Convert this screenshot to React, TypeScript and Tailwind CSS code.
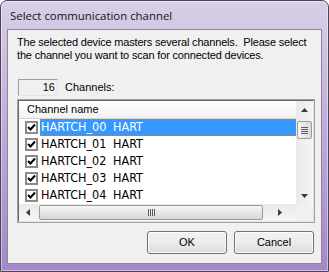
import React from "react";

const ui = { fontFamily: '"Liberation Sans", Arial, sans-serif' };
const listFont = { fontFamily: '"Liberation Sans Narrow", "DejaVu Sans Condensed", "Liberation Sans", sans-serif' };
const title = { fontFamily: '"Open Sans", "Noto Sans", sans-serif' };

function Check() {
  return (
    <svg width="9" height="9" viewBox="0 0 9 9">
      <path d="M1 4 L3.5 6.5 L8 1.5" fill="none" stroke="#000" strokeWidth="2" />
    </svg>
  );
}

function Tri({ dir }: { dir: "up" | "down" | "left" | "right" }) {
  const p =
    dir === "up"
      ? "M0 4 L3.5 0 L7 4 Z"
      : dir === "down"
      ? "M0 0 L7 0 L3.5 4 Z"
      : dir === "left"
      ? "M4 0 L4 7 L0 3.5 Z"
      : "M0 0 L0 7 L4 3.5 Z";
  const w = dir === "up" || dir === "down" ? 7 : 4;
  const h = dir === "up" || dir === "down" ? 4 : 7;
  return (
    <svg width={w} height={h} viewBox={`0 0 ${w} ${h}`}>
      <path d={p} fill="#3a3a3a" />
    </svg>
  );
}

export default function App() {
  const rows = ["HARTCH_00", "HARTCH_01", "HARTCH_02", "HARTCH_03", "HARTCH_04"];
  return (
    <div className="w-[329px] h-[272px] flex flex-col rounded-t-[7px] border border-[#4a4656] bg-gradient-to-b from-[#d9cfe5] via-[#bfa9da] to-[#a587c8] shadow-[inset_0_0_0_1px_rgba(255,255,255,0.45)]">
      <div className="h-[28px] flex items-center pl-[9px] pt-[1px] text-[11.4px] text-[#141414]" style={title}>
        Select communication channel
      </div>
      <div className="mx-[6px] h-[235px] border border-[#8d8699] bg-[#f0f0f0] flex flex-col text-[11px] text-black" style={ui}>
        <div className="pl-[9px] pt-[6px] leading-[13px] tracking-[-0.18px]">
          <div>The selected device masters several channels.&nbsp; Please select</div>
          <div>the channel you want to scan for connected devices.</div>
        </div>
        <div className="mt-[17px] ml-[10px] flex items-center">
          <div className="w-[40px] h-[17px] border border-t-[#a0a0a0] border-l-[#a0a0a0] border-r-[#e3e3e3] border-b-[#e3e3e3] flex items-center justify-end pr-[2px]">
            16
          </div>
          <div className="ml-[7px]">Channels:</div>
        </div>
        <div className="mt-[3px] ml-[9px] w-[298px] h-[124px] border border-[#a0a0a0] flex">
          <div className="flex-1 border border-[#696969] border-r-[#e3e3e3] border-b-[#e3e3e3] bg-white flex flex-col">
            <div className="flex h-[103px]">
              <div className="w-[277px] flex flex-col">
                <div className="h-[18px] flex items-center pl-[8px] border-b border-[#d5d5d5] bg-gradient-to-b from-[#ffffff] to-[#f2f2f2]">
                  Channel name
                </div>
                {rows.map((r, i) => (
                  <div key={r} className="h-[17px] flex items-center text-[12.5px]" style={listFont}>
                    <div className="ml-[6px] w-[13px] h-[13px] shrink-0 border-2 border-[#8a8a8a] bg-white flex items-center justify-center">
                      <Check />
                    </div>
                    <div
                      className={
                        "ml-[2px] flex-1 h-[17px] flex items-center pl-[1px] " +
                        (i === 0 ? "bg-[#3399ff] text-white border-y border-dotted border-[#d9782a]" : "")
                      }
                    >
                      <div className="w-[72px] shrink-0">{r}</div>
                      <div>HART</div>
                    </div>
                  </div>
                ))}
              </div>
              <div className="w-[17px] flex flex-col bg-gradient-to-r from-[#e9e9e9] to-[#f5f5f5]">
                <div className="h-[17px] flex items-center justify-center">
                  <Tri dir="up" />
                </div>
                <div className="mt-[3px] mx-[1px] h-[18px] rounded-[2px] border border-[#9b9b9b] bg-gradient-to-r from-[#f6f6f6] to-[#dadada] flex flex-col items-center justify-center gap-[1px]">
                  <div className="w-[7px] h-[1px] bg-[#5d5d5d]" />
                  <div className="w-[7px] h-[1px] bg-[#5d5d5d]" />
                  <div className="w-[7px] h-[1px] bg-[#5d5d5d]" />
                  <div className="w-[7px] h-[1px] bg-[#5d5d5d]" />
                </div>
                <div className="flex-1" />
                <div className="h-[17px] flex items-center justify-center">
                  <Tri dir="down" />
                </div>
              </div>
            </div>
            <div className="h-[17px] flex">
              <div className="w-[277px] flex bg-gradient-to-b from-[#e9e9e9] to-[#f5f5f5]">
                <div className="w-[17px] flex items-center justify-center">
                  <Tri dir="left" />
                </div>
                <div className="ml-[3px] my-[1px] w-[224px] rounded-[2px] border border-[#9b9b9b] bg-gradient-to-b from-[#f6f6f6] to-[#d6d6d6] flex items-center justify-center gap-[1px]">
                  <div className="w-[1px] h-[7px] bg-[#5d5d5d]" />
                  <div className="w-[1px] h-[7px] bg-[#5d5d5d]" />
                  <div className="w-[1px] h-[7px] bg-[#5d5d5d]" />
                  <div className="w-[1px] h-[7px] bg-[#5d5d5d]" />
                </div>
                <div className="flex-1 flex items-center justify-center">
                  <Tri dir="right" />
                </div>
              </div>
              <div className="flex-1 bg-[#f0f0f0]" />
            </div>
          </div>
        </div>
        <div className="mt-[8px] flex justify-end gap-[7px] pr-[7px]">
          {["OK", "Cancel"].map((b) => (
            <div
              key={b}
              className="w-[80px] h-[23px] rounded-[3px] border border-[#707070] bg-gradient-to-b from-[#f2f2f2] via-[#ebebeb] to-[#dcdcdc] shadow-[inset_0_0_0_1px_#fcfcfc] flex items-center justify-center"
            >
              {b}
            </div>
          ))}
        </div>
      </div>
    </div>
  );
}
